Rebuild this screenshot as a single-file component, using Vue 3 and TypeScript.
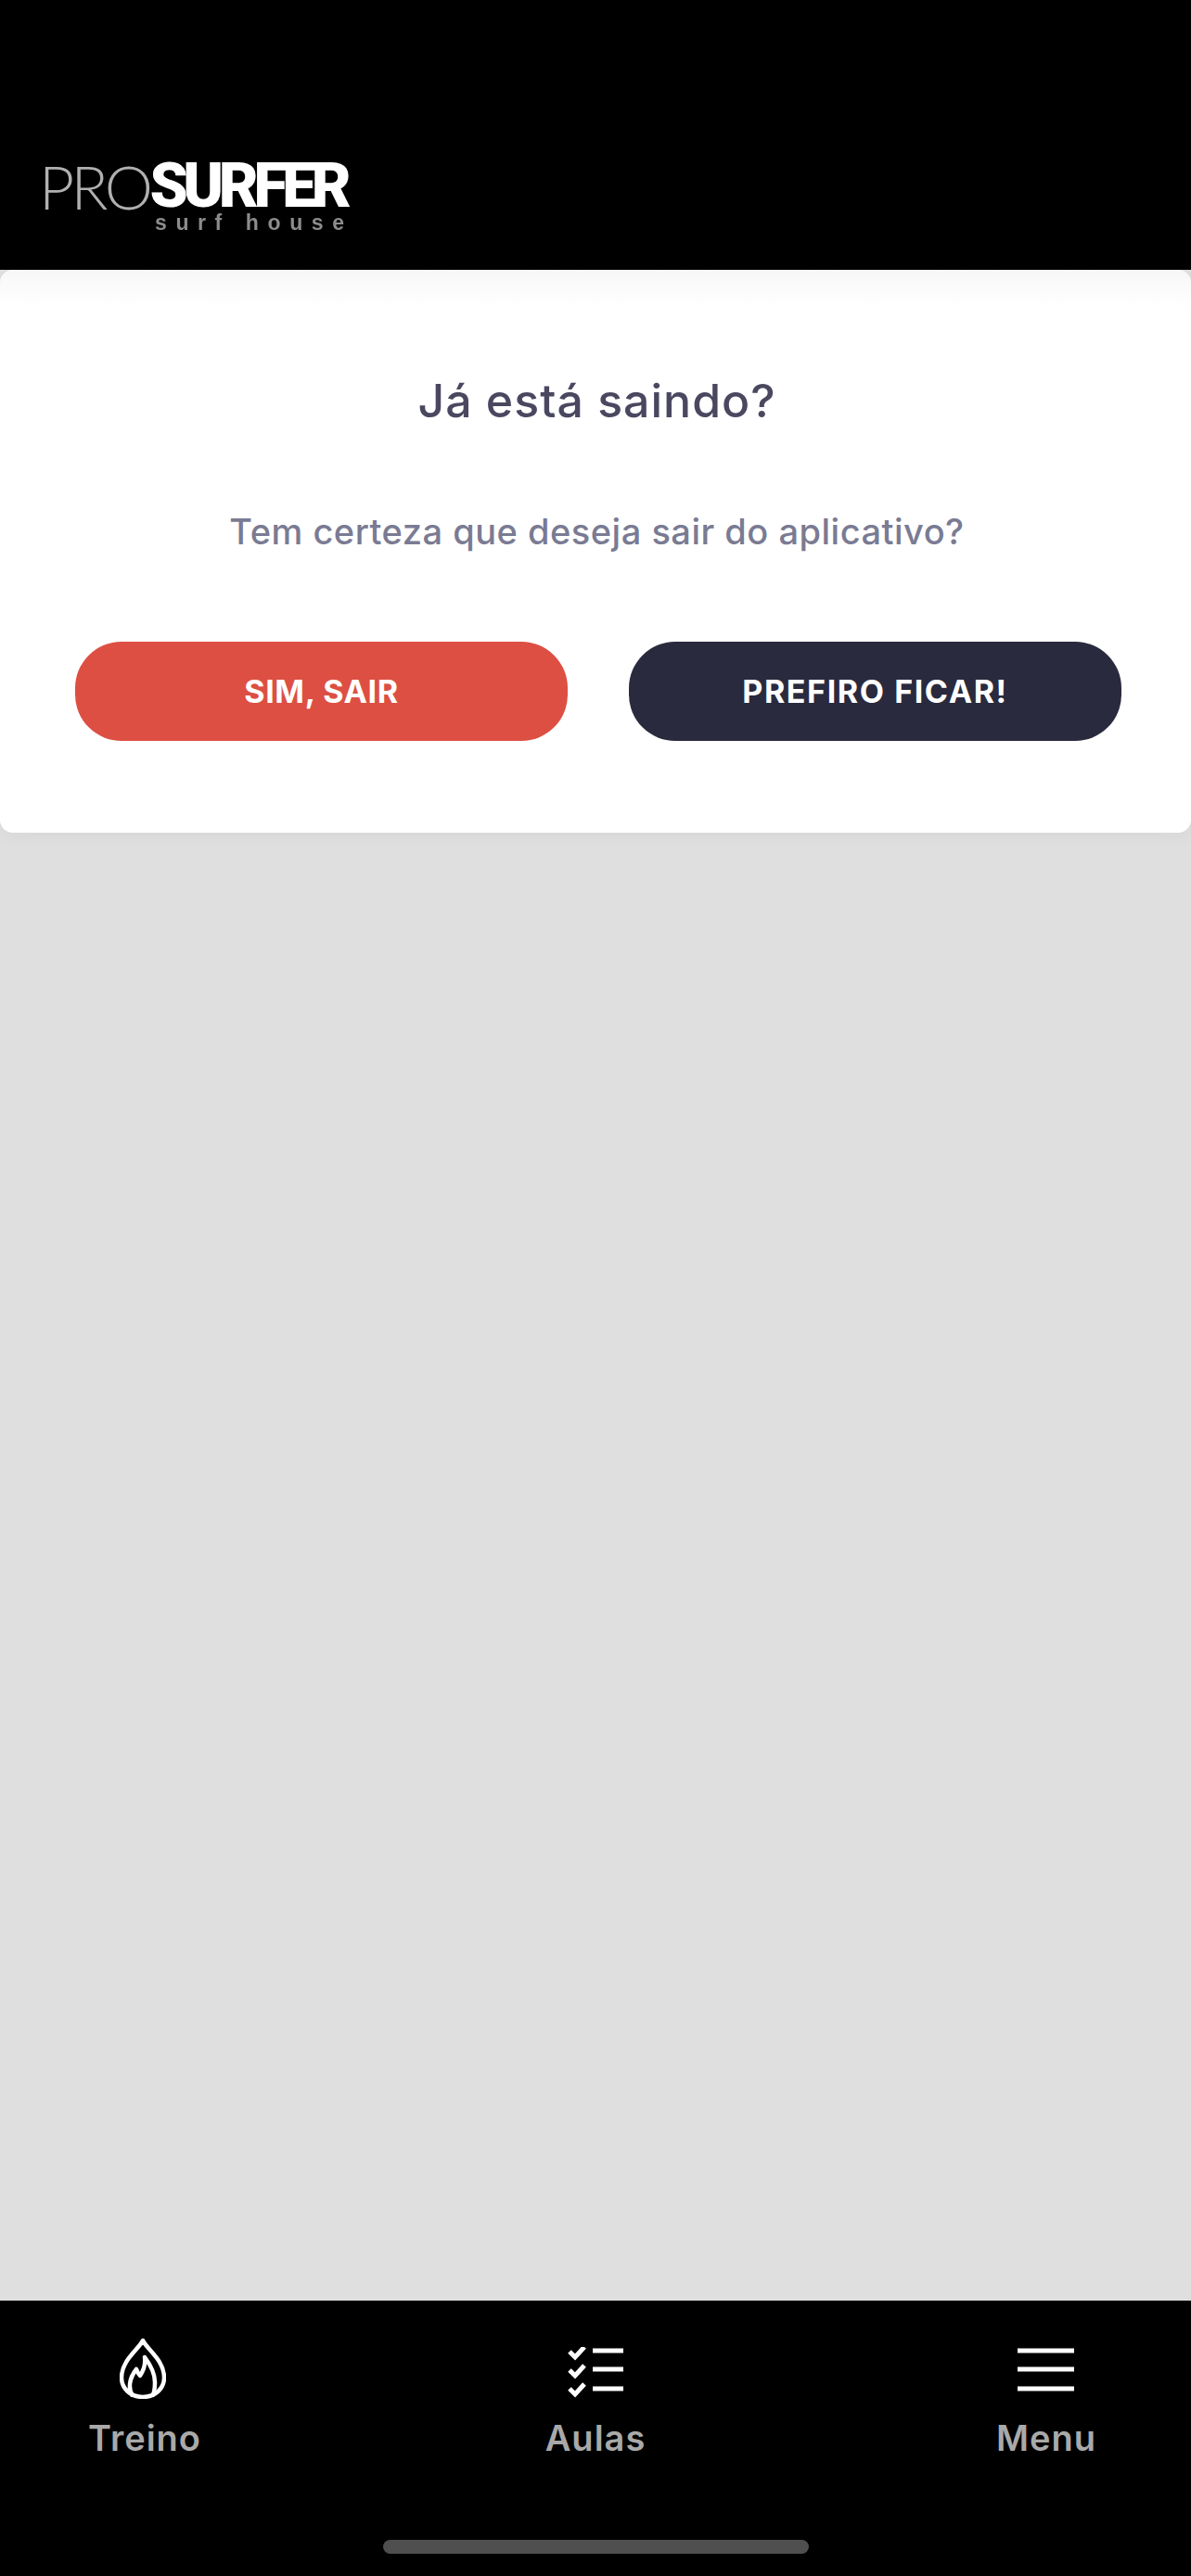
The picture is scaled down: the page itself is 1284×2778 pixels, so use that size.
<script setup lang="ts">
interface Tab {
  id: string
  label: string
}

const tabs: Tab[] = [
  { id: 'flame', label: 'Treino' },
  { id: 'list', label: 'Aulas' },
  { id: 'menu', label: 'Menu' },
]
</script>

<template>
  <div class="screen">
    <header class="top">
      <div class="logo">
        <div class="logo-main"><span class="logo-pro">PRO</span><span class="logo-surfer">SURFER</span></div>
        <div class="logo-sub">surf house</div>
      </div>
    </header>

    <main class="content">
      <section class="dialog">
        <h1 class="dialog-title">Já está saindo?</h1>
        <p class="dialog-text">Tem certeza que deseja sair do aplicativo?</p>
        <div class="dialog-actions">
          <button class="btn btn-red">SIM, SAIR</button>
          <button class="btn btn-dark">PREFIRO FICAR!</button>
        </div>
      </section>
    </main>

    <nav class="tabbar">
      <div class="tabs">
        <div v-for="tab in tabs" :key="tab.id" class="tab">
          <svg v-if="tab.id === 'flame'" class="tab-icon tab-icon-flame" width="50" height="66" viewBox="0 0 50 66" fill="none" stroke="#fff" stroke-width="4.5" stroke-linejoin="round">
            <path d="M25 3C21 12 2 24 2 43C2 55 12 64 25 64C38 64 48 55 48 43C48 24 29 12 25 3Z" />
            <path d="M14 63C9 55 10 44 18 34C19 37 20 39 22 41C26 35 28 28 27 21C33 29 38 38 38 48C38 54 38 59 35 63" />
          </svg>
          <svg v-else-if="tab.id === 'list'" class="tab-icon" width="60" height="56" viewBox="0 2 60 56" fill="none" stroke="#fff" stroke-linecap="butt">
            <g stroke-width="5">
              <path d="M27 6H60" />
              <path d="M27 26H60" />
              <path d="M27 47H60" />
            </g>
            <g stroke-width="5">
              <path d="M2 7L8 13L18 2" />
              <path d="M2 27L8 33L18 22" />
              <path d="M2 47L8 53L18 42" />
            </g>
          </svg>
          <svg v-else class="tab-icon tab-icon-menu" width="61" height="56" viewBox="0 2 61 56" fill="none" stroke="#fff" stroke-width="5">
            <path d="M0 6H61" />
            <path d="M0 26H61" />
            <path d="M0 47H61" />
          </svg>
          <span class="tab-label">{{ tab.label }}</span>
        </div>
      </div>
      <div class="home-bar"></div>
    </nav>
  </div>
</template>

<style>
html, body { margin: 0; padding: 0; background: #dfdfdf; }
</style>

<style scoped>
.screen {
  width: 1284px;
  height: 2778px;
  display: flex;
  flex-direction: column;
  overflow: hidden;
  background: #dfdfdf;
  font-family: Inter, "Noto Sans", sans-serif;
}

.top {
  height: 291px;
  flex: none;
  background: #000;
  padding: 175px 0 0 42px;
  box-sizing: border-box;
}

.logo {
  width: 340px;
  filter: blur(0.7px);
  color: #fff;
}

.logo-main {
  display: flex;
  height: 52px;
  line-height: 52px;
  font-size: 66px;
  white-space: nowrap;
}

.logo-pro {
  font-family: Lato, sans-serif;
  font-weight: 300;
  color: #b0b0b0;
  letter-spacing: -3.6px;
}

.logo-surfer {
  font-family: Roboto, sans-serif;
  font-weight: 900;
  letter-spacing: -5.4px;
}

.logo-sub {
  margin: 3px 0 0 125px;
  font-family: "Liberation Sans", sans-serif;
  font-size: 23px;
  line-height: 20px;
  font-weight: 700;
  letter-spacing: 9.6px;
  color: #8c8c8c;
  white-space: nowrap;
}

.content {
  flex: 1;
}

.dialog {
  height: 607px;
  box-sizing: border-box;
  padding-top: 112px;
  background: linear-gradient(#f7f7f7, #fff 40px);
  border-radius: 14px;
  box-shadow: 0 4px 20px rgba(0, 0, 0, 0.04);
  text-align: center;
}

.dialog-title {
  margin: 0;
  padding-left: 3px;
  font-size: 50px;
  line-height: 58px;
  font-weight: 500;
  letter-spacing: 1px;
  color: #4a4860;
}

.dialog-text {
  margin: 90px 0 0;
  padding-left: 3px;
  font-size: 38px;
  line-height: 44px;
  font-weight: 500;
  letter-spacing: 0.5px;
  color: #7a7b93;
}

.dialog-actions {
  display: flex;
  justify-content: space-between;
  margin-top: 97px;
  padding: 0 75px 0 81px;
}

.btn {
  width: 531px;
  height: 107px;
  border: none;
  border-radius: 50px;
  color: #fff;
  font-family: inherit;
  font-size: 34px;
  font-weight: 700;
  letter-spacing: 0.6px;
}

.btn-red { background: #dd4f43; }
.btn-dark { background: #292a3d; letter-spacing: 1.6px; }

.tabbar {
  height: 297px;
  flex: none;
  box-sizing: border-box;
  background: #000;
  display: flex;
  flex-direction: column;
  align-items: center;
}

.tabs {
  width: 100%;
  box-sizing: border-box;
  height: 258px;
  padding: 0 61px;
  display: grid;
  grid-template-columns: repeat(3, 190px);
  justify-content: space-between;
}

.tab {
  height: 170px;
  display: flex;
  flex-direction: column;
  align-items: center;
  justify-content: flex-end;
}

.tab-icon {
  flex: none;
}

.tab-icon-flame {
  margin-right: 4px;
}

.tab-icon-menu {
  margin-right: 2px;
}

.tab-label {
  margin-top: 20px;
  font-size: 38px;
  line-height: 44px;
  font-weight: 600;
  letter-spacing: 1px;
  color: #a9a9a9;
}

.home-bar {
  width: 459px;
  height: 15px;
  border-radius: 8px;
  background: #4f4f4f;
}
</style>
